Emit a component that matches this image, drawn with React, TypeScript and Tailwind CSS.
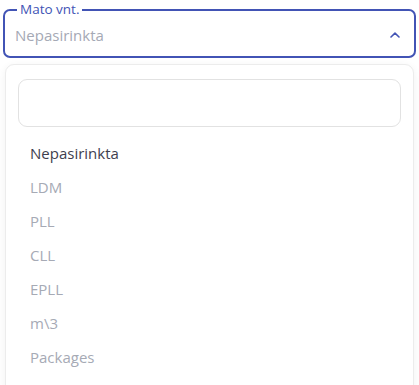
import { useState } from "react";

const options = ["Nepasirinkta", "LDM", "PLL", "CLL", "EPLL", "m\\3", "Packages"];

export default function App() {
  const [selected] = useState("Nepasirinkta");

  return (
    <div
      className="h-[385px] w-[419px] overflow-hidden bg-white"
      style={{ fontFamily: '"Open Sans", sans-serif' }}
    >
      <div className="px-[3px] pt-[2px]">
        <fieldset className="relative h-[56px] rounded-[7px] border-2 border-[#4254b5] pl-[10px] pr-[13px]">
          <legend className="ml-[2px] px-[3px] text-[13.5px] leading-[15px] text-[#4254b5]">Mato vnt.</legend>
          <div className="flex h-[37px] items-center justify-between pb-[1px]">
            <span className="text-[15px] text-[#a5a9b5]">Nepasirinkta</span>
            <svg width="10" height="6" viewBox="0 0 10 6" className="mr-[1px]">
              <path d="M1 5 L5 1.2 L9 5" fill="none" stroke="#4254b5" strokeWidth="1.6" strokeLinecap="round" strokeLinejoin="round" />
            </svg>
          </div>
        </fieldset>
      </div>

      <div className="ml-[5px] mr-[5px] mt-[6px] h-[330px] rounded-[9px] border border-[#ececec] bg-white px-[12px] pt-[14px] shadow-[0_2px_8px_rgba(0,0,0,0.06)]">
        <div className="h-[48px] rounded-[9px] border border-[#e2e2e2]" />
        <ul className="mt-[9px]">
          {options.map((o) => (
            <li
              key={o}
              className={`flex h-[34px] items-center px-[12px] text-[15px] ${
                o === selected ? "text-[#3e3e4e]" : "text-[#a6aab5]"
              }`}
            >
              {o}
            </li>
          ))}
        </ul>
      </div>
    </div>
  );
}
